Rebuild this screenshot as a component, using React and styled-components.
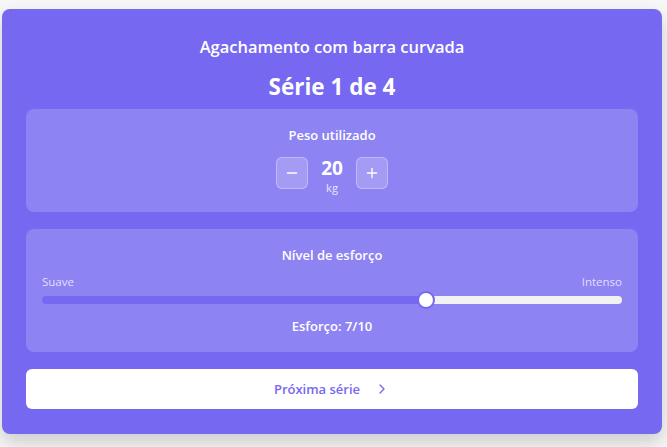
import React, { useState } from "react";
import styled, { createGlobalStyle } from "styled-components";
import { Minus, Plus, ChevronRight } from "lucide-react";

const Global = createGlobalStyle`
  body {
    margin: 0;
    background: #f7f7f8;
    font-family: "Open Sans", "Noto Sans", sans-serif;
  }
`;

const Wrap = styled.div`
  padding: 9px 5px 14px 2px;
`;

const Card = styled.div`
  background: #7668f0;
  border-radius: 8px;
  padding: 24px 24px 25px;
  box-shadow: 0 8px 18px rgba(0, 0, 0, 0.18);
  color: #fff;
  display: flex;
  flex-direction: column;
`;

const Title = styled.h2`
  margin: 2px 0 0;
  font-size: 16.5px;
  font-weight: 600;
  text-align: center;
  line-height: 24px;
`;

const Series = styled.h1`
  margin: 14px 0 8px;
  font-size: 22.5px;
  font-weight: 700;
  text-align: center;
  line-height: 28px;
`;

const Panel = styled.section`
  background: rgba(255, 255, 255, 0.18);
  border-radius: 8px;
  padding: 16px;
  margin-bottom: ${(p) => p.$gap || 0}px;
  display: flex;
  flex-direction: column;
  align-items: center;
`;

const Label = styled.div`
  font-size: 13px;
  font-weight: 600;
  line-height: 20px;
`;

const Stepper = styled.div`
  display: flex;
  align-items: flex-start;
  gap: 12px;
  margin-top: 12px;
`;

const StepButton = styled.button`
  width: 32px;
  height: 32px;
  border-radius: 6px;
  border: 1px solid rgba(255, 255, 255, 0.3);
  background: rgba(255, 255, 255, 0.2);
  color: #fff;
  display: flex;
  align-items: center;
  justify-content: center;
  padding: 0;
  cursor: pointer;
`;

const Value = styled.div`
  display: flex;
  flex-direction: column;
  align-items: center;
  min-width: 24px;
`;

const Number = styled.span`
  font-size: 19px;
  font-weight: 700;
  line-height: 23px;
`;

const Unit = styled.span`
  font-size: 11px;
  line-height: 16px;
  opacity: 0.8;
`;

const Ends = styled.div`
  align-self: stretch;
  display: flex;
  justify-content: space-between;
  font-size: 11.5px;
  color: rgba(255, 255, 255, 0.75);
  margin-top: 9px;
  line-height: 16px;
`;

const Range = styled.input`
  -webkit-appearance: none;
  appearance: none;
  align-self: stretch;
  margin: 6px 0 0;
  height: 8px;
  border-radius: 4px;
  outline: none;

  &::-webkit-slider-thumb {
    -webkit-appearance: none;
    width: 18px;
    height: 18px;
    border-radius: 50%;
    background: #fff;
    border: 2px solid #7668f0;
    box-sizing: border-box;
  }
`;

const Effort = styled.div`
  font-size: 13px;
  font-weight: 600;
  line-height: 20px;
  margin-top: 12px;
`;

const Next = styled.button`
  height: 40px;
  border: none;
  border-radius: 6px;
  background: #fff;
  color: #7668f0;
  font-family: inherit;
  font-size: 13px;
  font-weight: 600;
  display: flex;
  align-items: center;
  justify-content: center;
  gap: 14px;
  cursor: pointer;
`;

export default function App() {
  const [weight, setWeight] = useState(20);
  const [effort, setEffort] = useState(7);
  const pct = ((effort - 1) / 9) * 100;

  return (
    <Wrap>
      <Global />
      <Card>
        <Title>Agachamento com barra curvada</Title>
        <Series>Série 1 de 4</Series>
        <Panel $gap={17}>
          <Label>Peso utilizado</Label>
          <Stepper>
            <StepButton onClick={() => setWeight(weight - 1)}>
              <Minus size={16} strokeWidth={2} />
            </StepButton>
            <Value>
              <Number>{weight}</Number>
              <Unit>kg</Unit>
            </Value>
            <StepButton onClick={() => setWeight(weight + 1)}>
              <Plus size={16} strokeWidth={2} />
            </StepButton>
          </Stepper>
        </Panel>
        <Panel $gap={17}>
          <Label>Nível de esforço</Label>
          <Ends>
            <span>Suave</span>
            <span>Intenso</span>
          </Ends>
          <Range
            type="range"
            min={1}
            max={10}
            value={effort}
            onChange={(e) => setEffort(+e.target.value)}
            style={{
              background: `linear-gradient(to right, #7668f0 ${pct}%, #f2f2f4 ${pct}%)`,
            }}
          />
          <Effort>Esforço: {effort}/10</Effort>
        </Panel>
        <Next>
          Próxima série
          <ChevronRight size={16} strokeWidth={2} />
        </Next>
      </Card>
    </Wrap>
  );
}
